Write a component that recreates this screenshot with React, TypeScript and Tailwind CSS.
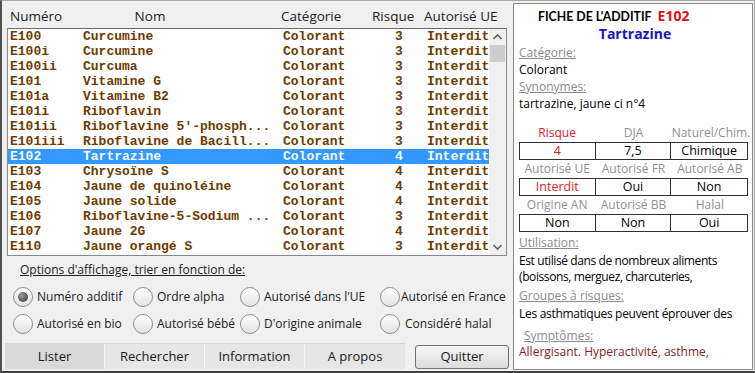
import React from "react";

const rows: [string, string, string, string, string][] = [
	["E100", "Curcumine", "Colorant", "3", "Interdit"],
	["E100i", "Curcumine", "Colorant", "3", "Interdit"],
	["E100ii", "Curcuma", "Colorant", "3", "Interdit"],
	["E101", "Vitamine G", "Colorant", "3", "Interdit"],
	["E101a", "Vitamine B2", "Colorant", "3", "Interdit"],
	["E101i", "Riboflavin", "Colorant", "3", "Interdit"],
	["E101ii", "Riboflavine 5'-phosph...", "Colorant", "3", "Interdit"],
	["E101iii", "Riboflavine de Bacill...", "Colorant", "3", "Interdit"],
	["E102", "Tartrazine", "Colorant", "4", "Interdit"],
	["E103", "Chrysoïne S", "Colorant", "4", "Interdit"],
	["E104", "Jaune de quinoléine", "Colorant", "4", "Interdit"],
	["E105", "Jaune solide", "Colorant", "4", "Interdit"],
	["E106", "Riboflavine-5-Sodium ...", "Colorant", "3", "Interdit"],
	["E107", "Jaune 2G", "Colorant", "4", "Interdit"],
	["E110", "Jaune orangé S", "Colorant", "3", "Interdit"],
];

function Radio({ label, checked, w, gap = "gap-[4px]" }: { label: string; checked?: boolean; w: string; gap?: string }) {
	return (
		<div className={`flex items-center ${gap} ${w}`}>
			<span className="w-[20px] h-[20px] rounded-full border border-[#8c8c8c] bg-gradient-to-b from-[#ffffff] to-[#e2e2e2] flex items-center justify-center shrink-0">
				{checked && (
					<span className="w-[10px] h-[10px] rounded-full bg-[radial-gradient(circle_at_35%_35%,#a0a0a0,#2c2c2c)]" />
				)}
			</span>
			<span className="whitespace-nowrap">{label}</span>
		</div>
	);
}

function Labels({ items }: { items: [string, boolean][] }) {
	return (
		<div className="grid grid-cols-3 w-[229px]">
			{items.map(([t, red]) => (
				<div key={t} className={`h-[18px] text-center leading-[18px] ${red ? "text-[#e0202a]" : "text-[#909090]"}`}>
					{t}
				</div>
			))}
		</div>
	);
}

function Values({ items }: { items: [string, boolean][] }) {
	return (
		<div className="grid grid-cols-3 w-[229px] h-[18px] border border-[#303030] text-[12.5px]">
			{items.map(([t, red], i) => (
				<div
					key={i}
					className={`text-center leading-[16px] ${red ? "text-[#e0202a]" : ""} ${i < 2 ? "border-r border-[#303030]" : ""}`}
				>
					{t}
				</div>
			))}
		</div>
	);
}

export default function App() {
	const lbl = "text-[#8a8a8a] underline leading-[17px]";
	return (
		<div className="w-[755px] h-[373px] bg-[#f0f0f0] border-t border-r border-[#a8a8a8] border-l-2 border-l-[#505050] border-b-2 border-b-[#404040] flex font-['Open_Sans',sans-serif] text-[#1a1a1a] overflow-hidden">
			{/* liste des additifs */}
			<div className="w-[510px] flex flex-col pl-[5px] pt-[3px]">
				<div className="h-[24px] flex items-center text-[13.5px] text-[#202020]">
					<span className="w-[73px] pl-[3px]">Numéro</span>
					<span className="w-[200px] text-center pr-[60px]">Nom</span>
					<span className="w-[92px] pl-[1px]">Catégorie</span>
					<span className="w-[52px]">Risque</span>
					<span>Autorisé UE</span>
				</div>
				<div className="w-[500px] h-[228px] bg-white border border-[#828790] border-t-[#6a6a6a] flex">
					<div className="flex-1 flex flex-col font-['Liberation_Mono',monospace] font-bold text-[13px] text-[#6e3b00]">
						{rows.map((r) => {
							const sel = r[0] === "E102";
							return (
								<div
									key={r[0]}
									className={`h-[15px] leading-[15px] grid grid-cols-[73px_200px_112px_32px_1fr] pl-[2px] whitespace-pre ${sel ? "bg-[#3399ff] text-[#f4f8ff]" : ""}`}
								>
									<span>{r[0]}</span>
									<span>{r[1]}</span>
									<span>{r[2]}</span>
									<span>{r[3]}</span>
									<span>{r[4]}</span>
								</div>
							);
						})}
					</div>
					<div className="w-[17px] bg-[#f0f0f0] flex flex-col items-center">
						<svg width="17" height="16" viewBox="0 0 17 16" className="shrink-0">
							<path d="M4.5 10 L8.5 6 L12.5 10" fill="none" stroke="#606060" strokeWidth="1.6" />
						</svg>
						<div className="w-[15px] h-[17px] bg-[#cdcdcd]" />
						<div className="flex-1" />
						<svg width="17" height="16" viewBox="0 0 17 16" className="shrink-0">
							<path d="M4.5 6 L8.5 10 L12.5 6" fill="none" stroke="#606060" strokeWidth="1.6" />
						</svg>
					</div>
				</div>
				<div className="pl-[13px] pt-[5px] text-[12px] text-[#202020] underline h-[22px] leading-[18px]">
					Options d'affichage, trier en fonction de:
				</div>
				<div className="flex flex-col gap-[7px] pl-[6px] pt-[9px] text-[12px] text-[#202020]">
					<div className="flex">
						<Radio label="Numéro additif" checked w="w-[120px]" />
						<Radio label="Ordre alpha" w="w-[107px]" />
						<Radio label="Autorisé dans l'UE" w="w-[140px]" />
						<Radio label="Autorisé en France" w="w-[124px]" gap="gap-[1px]" />
					</div>
					<div className="flex">
						<Radio label="Autorisé en bio" w="w-[120px]" />
						<Radio label="Autorisé bébé" w="w-[107px]" />
						<Radio label="D'origine animale" w="w-[140px]" />
						<Radio label="Considéré halal" w="w-[124px]" gap="gap-[5px]" />
					</div>
				</div>
				<div className="mt-auto mb-[2px] flex items-center h-[26px] text-[13px] text-[#1a1a1a]">
					<div className="flex h-full w-[400px] -ml-[2px] border-t border-[#d8d8d8]">
						<div className="w-[100px] flex items-center justify-center bg-[#d9d9d9] border-r border-[#f8f8f8]">Lister</div>
						<div className="w-[100px] flex items-center justify-center bg-[#e6e6e6] border-r border-[#f8f8f8]">Rechercher</div>
						<div className="w-[100px] flex items-center justify-center bg-[#e6e6e6] border-r border-[#f8f8f8]">Information</div>
						<div className="w-[100px] flex items-center justify-center bg-[#e6e6e6]">A propos</div>
					</div>
					<div className="ml-[10px] w-[94px] h-[24px] mt-[2px] rounded-[3px] border border-[#707070] bg-gradient-to-b from-[#f6f6f6] to-[#dcdcdc] flex items-center justify-center">
						Quitter
					</div>
				</div>
			</div>

			{/* fiche de l'additif */}
			<div className="w-[240px] h-[367px] mt-[2px] ml-[1px] bg-white border border-[#8a8a8a] pl-[5px] pr-[3px] text-[12px] text-black">
				<div className="h-[21px] flex items-end pl-[19px] gap-[6px]">
					<span className="font-['Lato',sans-serif] font-bold text-[12.3px] leading-[17px]">FICHE DE L'ADDITIF</span>
					<span className="font-bold text-[14px] text-[#e01010] leading-[18px]">E102</span>
				</div>
				<div className="h-[18px] text-center font-bold text-[14px] text-[#1515c8] leading-[18px] pl-[2px]">Tartrazine</div>
				<div className={`${lbl} mt-[1px]`}>Catégorie:</div>
				<div className="leading-[17px]">Colorant</div>
				<div className={lbl}>Synonymes:</div>
				<div className="leading-[17px]">tartrazine, jaune ci n°4</div>
				<div className="mt-[12px]">
					<Labels items={[["Risque", true], ["DJA", false], ["Naturel/Chim.", false]]} />
					<Values items={[["4", true], ["7,5", false], ["Chimique", false]]} />
					<Labels items={[["Autorisé UE", false], ["Autorisé FR", false], ["Autorisé AB", false]]} />
					<Values items={[["Interdit", true], ["Oui", false], ["Non", false]]} />
					<Labels items={[["Origine AN", false], ["Autorisé BB", false], ["Halal", false]]} />
					<Values items={[["Non", false], ["Non", false], ["Oui", false]]} />
				</div>
				<div className={`${lbl} mt-[2px]`}>Utilisation:</div>
				<div className="leading-[16px] mt-[2px] tracking-[-0.4px]">Est utilisé dans de nombreux aliments</div>
				<div className="leading-[16px] tracking-[-0.4px]">(boissons, merguez, charcuteries,</div>
				<div className={`${lbl} mt-[2px]`}>Groupes à risques:</div>
				<div className="leading-[17px] mt-[1px] tracking-[-0.3px]">Les asthmatiques peuvent éprouver des</div>
				<div className={`${lbl} mt-[5px] pl-[5px]`}>Symptômes:</div>
				<div className="leading-[16px] text-[#8b1a1a]">Allergisant. Hyperactivité, asthme,</div>
			</div>
		</div>
	);
}
